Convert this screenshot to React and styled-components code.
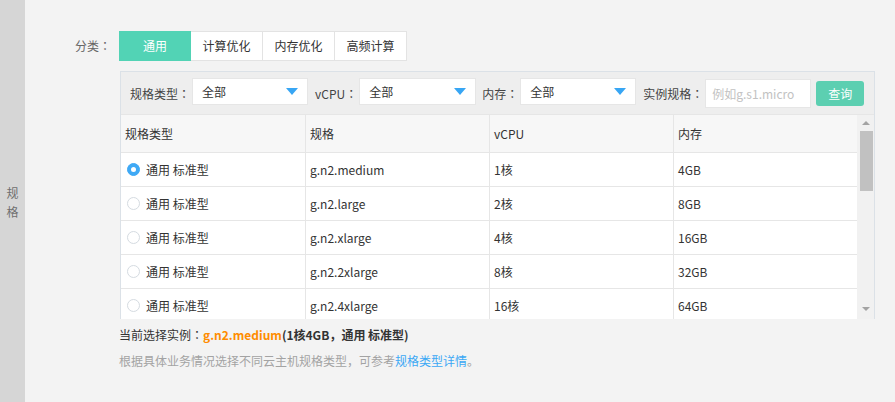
import React from "react";
import styled, { createGlobalStyle } from "styled-components";

const Global = createGlobalStyle`
  html, body { margin: 0; padding: 0; background: #f3f3f3; }
  body {
    font-family: "Noto Sans CJK SC", "Noto Sans", sans-serif;
    font-size: 12px;
    color: #333;
  }
  * { box-sizing: border-box; }
`;

const Page = styled.div`
  display: flex;
  width: 895px;
  height: 402px;
  overflow: hidden;
  background: #f3f3f3;
`;

const Side = styled.div`
  width: 25px;
  flex: none;
  background: #d6d6d6;
  display: flex;
  align-items: center;
  justify-content: center;
`;

const SideText = styled.div`
  width: 12px;
  font-size: 12px;
  line-height: 19px;
  color: #6f6f6f;
  text-align: center;
  word-break: break-all;
  margin-top: 2px;
`;

const Content = styled.div`
  flex: 1;
  padding: 31px 0 0 50px;
`;

const FormRow = styled.div`
  display: flex;
  align-items: flex-start;
`;

const Label = styled.div`
  width: 44px;
  flex: none;
  line-height: 30px;
  color: #666;
`;

const Colon = styled.span`
  font-family: "Noto Sans CJK TC", "Noto Sans CJK SC", sans-serif;
`;

const Field = styled.div`
  display: flex;
  flex-direction: column;
`;

const Tabs = styled.div`
  display: flex;
`;

const Tab = styled.div`
  width: ${(p) => (p.$active ? "72px" : "73px")};
  height: 30px;
  line-height: 28px;
  text-align: center;
  margin-left: ${(p) => (p.$first ? "0" : "-1px")};
  border: 1px solid ${(p) => (p.$active ? "#52d3b5" : "#e3e3e3")};
  background: ${(p) => (p.$active ? "#52d3b5" : "#fff")};
  color: ${(p) => (p.$active ? "#fff" : "#333")};
  position: relative;
  z-index: ${(p) => (p.$active ? 1 : 0)};
`;

const Panel = styled.div`
  margin: 10px 0 0 1px;
  width: 755px;
  border: 1px solid #dbe1e7;
  border-bottom: none;
`;

const FilterBar = styled.div`
  height: 42px;
  background: #eeeeee;
  display: flex;
  align-items: center;
  padding-left: 9px;
`;

const FilterLabel = styled.span`
  color: #444;
  margin-left: ${(p) => p.$gap || 0}px;
  margin-right: 2px;
  white-space: nowrap;
`;

const Select = styled.div`
  width: ${(p) => p.$w}px;
  height: 27px;
  margin-top: -3px;
  background: #fff;
  border: 1px solid #e6e6e6;
  display: flex;
  align-items: center;
  justify-content: space-between;
  padding: 0 9px 0 9px;
  color: #333;
`;

const Caret = styled.span`
  width: 0;
  height: 0;
  border-left: 6px solid transparent;
  border-right: 6px solid transparent;
  border-top: 7px solid #38a6f4;
`;

const Input = styled.input`
  width: 106px;
  height: 29px;
  margin-top: 1px;
  border: 1px solid #e6e6e6;
  background: #fff;
  padding: 0 6px;
  font-family: inherit;
  font-size: 12px;
  color: #333;
  outline: none;
  &::placeholder { color: #c2c2c2; }
`;

const Button = styled.button`
  width: 48px;
  height: 25px;
  margin: 0 0 0 5px;
  border: none;
  border-radius: 3px;
  background: #5ccfb1;
  color: #fff;
  font-family: inherit;
  font-size: 12px;
  padding: 0;
`;

const TableArea = styled.div`
  display: flex;
  height: 205px;
  overflow: hidden;
  border-top: 1px solid #e6e6e6;
`;

const Table = styled.div`
  width: 736px;
  flex: none;
  display: flex;
  flex-direction: column;
`;

const Row = styled.div`
  display: grid;
  grid-template-columns: 184px 184px 184px 184px;
  height: ${(p) => (p.$head ? 38 : 34)}px;
  flex: none;
  background: ${(p) => (p.$head ? "#f7f7f7" : "#fff")};
  border-bottom: 1px solid #e6e6e6;
`;

const Cell = styled.div`
  display: flex;
  align-items: center;
  gap: 6px;
  padding-left: ${(p) => (p.$radio ? 6 : 4)}px;
  border-left: ${(p) => (p.$first ? "none" : "1px solid #e6e6e6")};
  color: #333;
  white-space: nowrap;
`;

const Radio = styled.span`
  width: 13px;
  height: 13px;
  border-radius: 50%;
  flex: none;
  border: 1px solid ${(p) => (p.$on ? "#3fa9f5" : "#d5dbe1")};
  background: ${(p) => (p.$on ? "#3fa9f5" : "#fff")};
  display: flex;
  align-items: center;
  justify-content: center;
  &::after {
    content: "";
    width: 5px;
    height: 5px;
    border-radius: 50%;
    background: #fff;
    display: ${(p) => (p.$on ? "block" : "none")};
  }
`;

const Scrollbar = styled.div`
  width: 17px;
  flex: none;
  background: #f1f1f1;
  display: flex;
  flex-direction: column;
  align-items: center;
  padding-top: 6px;
`;

const ArrowUp = styled.span`
  width: 0;
  height: 0;
  border-left: 4px solid transparent;
  border-right: 4px solid transparent;
  border-bottom: 4px solid #a3a3a3;
`;

const ArrowDown = styled.span`
  width: 0;
  height: 0;
  border-left: 4px solid transparent;
  border-right: 4px solid transparent;
  border-top: 4px solid #a3a3a3;
  margin-top: auto;
  margin-bottom: 8px;
`;

const Thumb = styled.div`
  width: 13px;
  height: 60px;
  margin: 6px 0 0 1px;
  background: #c1c1c1;
`;

const Summary = styled.div`
  margin-top: 7px;
  line-height: 18px;
  color: #333;
`;

const Orange = styled.b`
  color: #ff8c00;
  font-weight: 700;
`;

const Bold = styled.b`
  font-weight: 700;
  color: #333;
`;

const Hint = styled.div`
  margin-top: 8px;
  line-height: 18px;
  color: #a3a3a3;
`;

const Link = styled.a`
  color: #3ba8f5;
  text-decoration: none;
`;

const rows = [
  ["g.n2.medium", "1核", "4GB"],
  ["g.n2.large", "2核", "8GB"],
  ["g.n2.xlarge", "4核", "16GB"],
  ["g.n2.2xlarge", "8核", "32GB"],
  ["g.n2.4xlarge", "16核", "64GB"],
];

const tabs = ["通用", "计算优化", "内存优化", "高频计算"];

export default function App() {
  return (
    <>
      <Global />
      <Page>
        <Side>
          <SideText>规格</SideText>
        </Side>
        <Content>
          <FormRow>
            <Label>
              分类<Colon>：</Colon>
            </Label>
            <Field>
              <Tabs>
                {tabs.map((t, i) => (
                  <Tab key={t} $active={i === 0} $first={i === 0}>
                    {t}
                  </Tab>
                ))}
              </Tabs>
              <Panel>
                <FilterBar>
                  <FilterLabel>
                    规格类型<Colon>：</Colon>
                  </FilterLabel>
                  <Select $w={116}>
                    全部
                    <Caret />
                  </Select>
                  <FilterLabel $gap={7}>
                    vCPU<Colon>：</Colon>
                  </FilterLabel>
                  <Select $w={117}>
                    全部
                    <Caret />
                  </Select>
                  <FilterLabel $gap={6}>
                    内存<Colon>：</Colon>
                  </FilterLabel>
                  <Select $w={116}>
                    全部
                    <Caret />
                  </Select>
                  <FilterLabel $gap={7}>
                    实例规格<Colon>：</Colon>
                  </FilterLabel>
                  <Input placeholder="例如g.s1.micro" />
                  <Button>查询</Button>
                </FilterBar>
                <TableArea>
                  <Table>
                    <Row $head>
                      <Cell $first>规格类型</Cell>
                      <Cell>规格</Cell>
                      <Cell>vCPU</Cell>
                      <Cell>内存</Cell>
                    </Row>
                    {rows.map((r, i) => (
                      <Row key={r[0]}>
                        <Cell $first $radio>
                          <Radio $on={i === 0} />
                          通用 标准型
                        </Cell>
                        <Cell>{r[0]}</Cell>
                        <Cell>{r[1]}</Cell>
                        <Cell>{r[2]}</Cell>
                      </Row>
                    ))}
                  </Table>
                  <Scrollbar>
                    <ArrowUp />
                    <Thumb />
                    <ArrowDown />
                  </Scrollbar>
                </TableArea>
              </Panel>
              <Summary>
                当前选择实例<Colon>：</Colon>
                <Orange>g.n2.medium</Orange>
                <Bold>(1核4GB，通用 标准型)</Bold>
              </Summary>
              <Hint>
                根据具体业务情况选择不同云主机规格类型，可参考<Link href="#">规格类型详情</Link>。
              </Hint>
            </Field>
          </FormRow>
        </Content>
      </Page>
    </>
  );
}
